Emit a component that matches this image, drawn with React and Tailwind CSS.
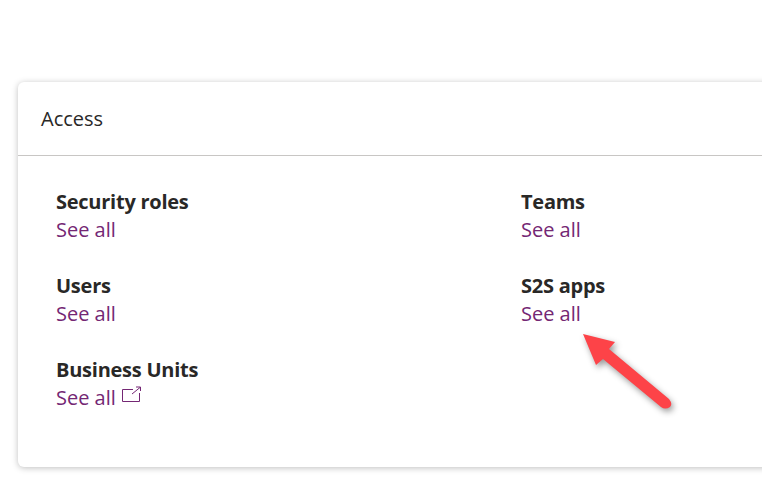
const items = [
  { title: 'Security roles' },
  { title: 'Teams' },
  { title: 'Users' },
  { title: 'S2S apps' },
  { title: 'Business Units', external: true },
];

function ExternalIcon() {
  return (
    <svg width="20" height="20" viewBox="0 0 20 20" fill="none" stroke="#742774" strokeWidth="1" className="absolute left-[65px] top-[-1px]">
      <path d="M12 6.5H1.5V18.5H18.5V10" />
      <path d="M11 11L19 4.5" />
      <path d="M15 4H19.5V8" />
    </svg>
  );
}

export default function App() {
  return (
    <div className="relative h-[480px] w-[762px] overflow-hidden bg-white pt-[82px] pl-[18px] font-['Open_Sans','Noto_Sans',sans-serif] text-[#292827]">
      <div className="h-[385px] w-[800px] rounded-md bg-white shadow-[0_1px_6px_rgba(0,0,0,0.25)]">
        <div className="flex h-[74px] items-center border-b border-[#c8c6c4] pl-[23px] text-[20px] leading-[26px]">
          Access
        </div>
        <div className="grid w-[744px] grid-cols-[465px_1fr] gap-y-[28px] pt-[32px] pl-[38px]">
          {items.map((item) => (
            <div key={item.title} className="h-[56px]">
              <div className="text-[20px] font-bold leading-[28px] tracking-[-0.25px]">{item.title}</div>
              <a className="relative inline-block text-[20px] leading-[28px] text-[#742774]">
                See all
                {item.external && <ExternalIcon />}
              </a>
            </div>
          ))}
        </div>
      </div>
      <svg width="110" height="90" viewBox="0 0 110 90" className="absolute left-[575px] top-[328px] drop-shadow-[2px_3px_3px_rgba(0,0,0,0.4)]">
        <path d="M8 6L40 14L34 21L94 71Q98 76 95 79Q90 82 86 79L28 31L21 37Z" fill="#fd4348" />
      </svg>
    </div>
  );
}
